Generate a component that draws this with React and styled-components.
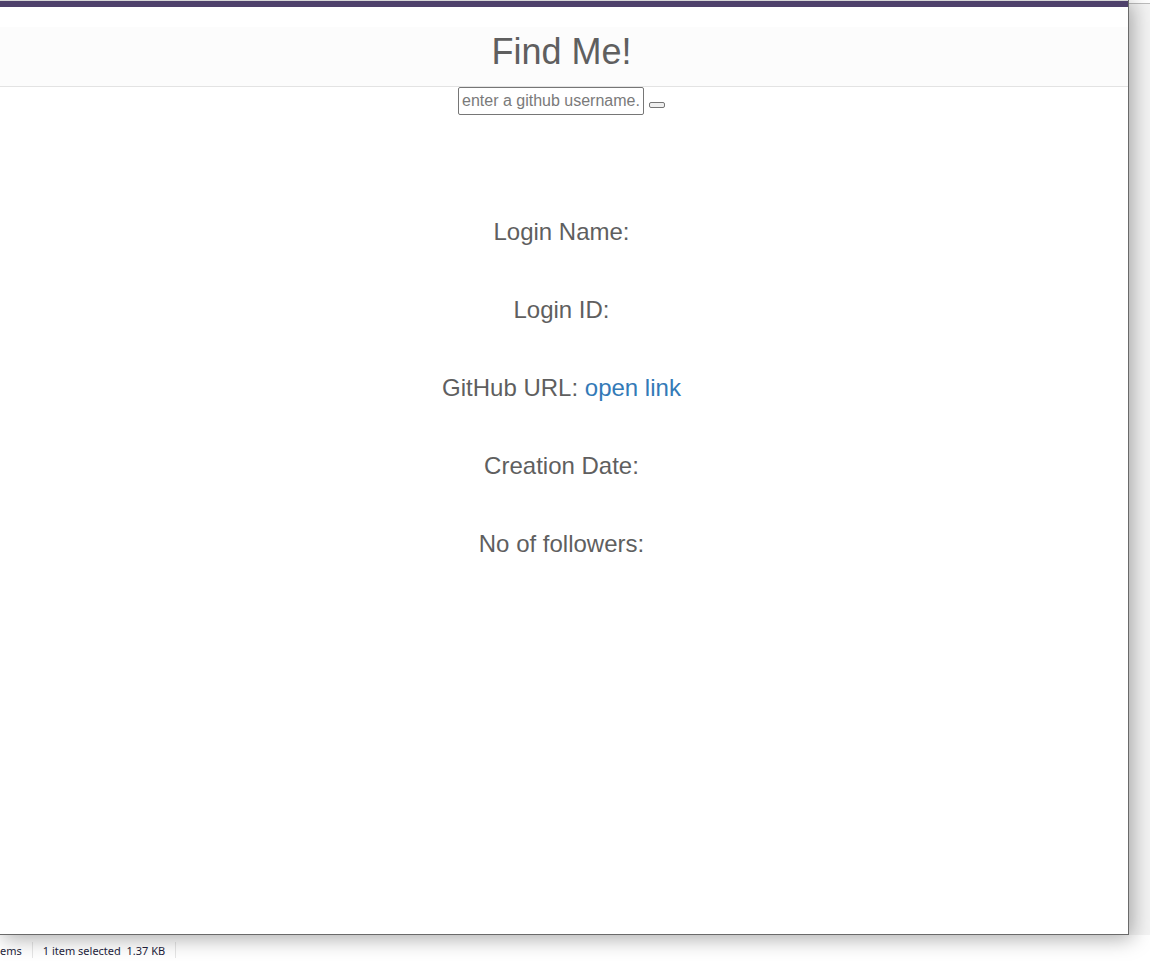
import React from "react";
import styled, { createGlobalStyle } from "styled-components";

const Global = createGlobalStyle`
  html, body { margin: 0; padding: 0; background: #ffffff; }
  body { width: 1150px; height: 961px; overflow: hidden; }
`;

const Screen = styled.div`
  width: 1150px;
  height: 961px;
  display: flex;
  flex-direction: column;
  background: #ffffff;
  font-family: "Liberation Sans", Arial, sans-serif;
`;

const Upper = styled.div`
  display: flex;
  height: 935px;
`;

const Window = styled.div`
  position: relative;
  z-index: 1;
  width: 1128px;
  height: 934px;
  background: #ffffff;
  border-right: 1px solid #6a6a6a;
  border-bottom: 1px solid #6a6a6a;
  box-shadow: 3px 3px 20px rgba(0, 0, 0, 0.35);
  display: flex;
  flex-direction: column;
`;

const BackStrip = styled.div`
  flex: 1;
  margin-top: 3px;
  border-top: 1px solid #bdbdbd;
  background: #f4f4f4;
`;

const TopLine = styled.div`
  height: 1px;
  background: #d6d6d6;
`;

const AccentBar = styled.div`
  height: 6px;
  background: #4f416b;
`;

const Page = styled.div`
  flex: 1;
  display: flex;
  flex-direction: column;
  align-items: center;
  padding-top: 20px;
  padding-right: 5px;
  color: #5f5f5f;
`;

const Header = styled.header`
  align-self: stretch;
  background: #fcfcfc;
  border-bottom: 1px solid #e3e3e3;
  padding: 5px 5px 14px 0;
  text-align: center;
  margin-right: -5px;
`;

const Title = styled.h1`
  margin: 0;
  font-size: 36px;
  line-height: 40px;
  font-weight: 400;
  color: #5f5f5f;
`;

const SearchRow = styled.form`
  display: flex;
  align-items: flex-start;
  gap: 5px;
  margin: 0;
`;

const SearchInput = styled.input`
  box-sizing: border-box;
  width: 186px;
  height: 28px;
  margin: 0;
  padding: 0 3px;
  border: 1px solid #767676;
  border-radius: 2px;
  font-family: "Liberation Sans", Arial, sans-serif;
  font-size: 16px;
  color: #333;
  background: #fff;
  &::placeholder { color: #7a7a7a; }
`;

const SearchButton = styled.button`
  box-sizing: border-box;
  width: 16px;
  height: 6px;
  margin: 15px 0 0 0;
  padding: 0;
  border: 1px solid #767676;
  border-radius: 2px;
  background: #efefef;
`;

const Details = styled.div`
  display: flex;
  flex-direction: column;
  align-items: center;
  gap: 52px;
  margin-top: 104px;
`;

const Field = styled.h3`
  margin: 0;
  font-size: 24px;
  line-height: 26px;
  font-weight: 400;
  color: #5f5f5f;
  white-space: nowrap;
`;

const FieldLink = styled.a`
  color: #337ab7;
  text-decoration: none;
`;

const StatusBar = styled.div`
  height: 26px;
  box-sizing: border-box;
  padding-top: 4px;
  display: flex;
  align-items: center;
  background: #ffffff;
  font-family: "Noto Sans", "Open Sans", sans-serif;
  font-size: 11px;
  color: #1e1e3c;
`;

const StatusCell = styled.span`
  display: flex;
  align-items: center;
  height: 16px;
  padding: ${(p) => p.$pad};
  border-right: 1px solid #e6e6e6;
  white-space: nowrap;
`;

const fields = [
  { label: "Login Name:" },
  { label: "Login ID:" },
  { label: "GitHub URL:", link: "open link" },
  { label: "Creation Date:" },
  { label: "No of followers:" },
];

export default function App() {
  return (
    <Screen>
      <Global />
      <Upper>
        <Window>
          <TopLine />
          <AccentBar />
          <Page>
            <Header>
              <Title>Find Me!</Title>
            </Header>
            <SearchRow onSubmit={(e) => e.preventDefault()}>
              <SearchInput placeholder="enter a github username." />
              <SearchButton type="submit" />
            </SearchRow>
            <Details>
              {fields.map((f) => (
                <Field key={f.label}>
                  {f.label}
                  {f.link && (
                    <>
                      {" "}
                      <FieldLink href="#">{f.link}</FieldLink>
                    </>
                  )}
                </Field>
              ))}
            </Details>
          </Page>
        </Window>
        <BackStrip />
      </Upper>
      <StatusBar>
        <StatusCell $pad="0 10px 0 0">ems</StatusCell>
        <StatusCell $pad="0 10px 0 10px">1 item selected&nbsp;&nbsp;1.37 KB</StatusCell>
      </StatusBar>
    </Screen>
  );
}
